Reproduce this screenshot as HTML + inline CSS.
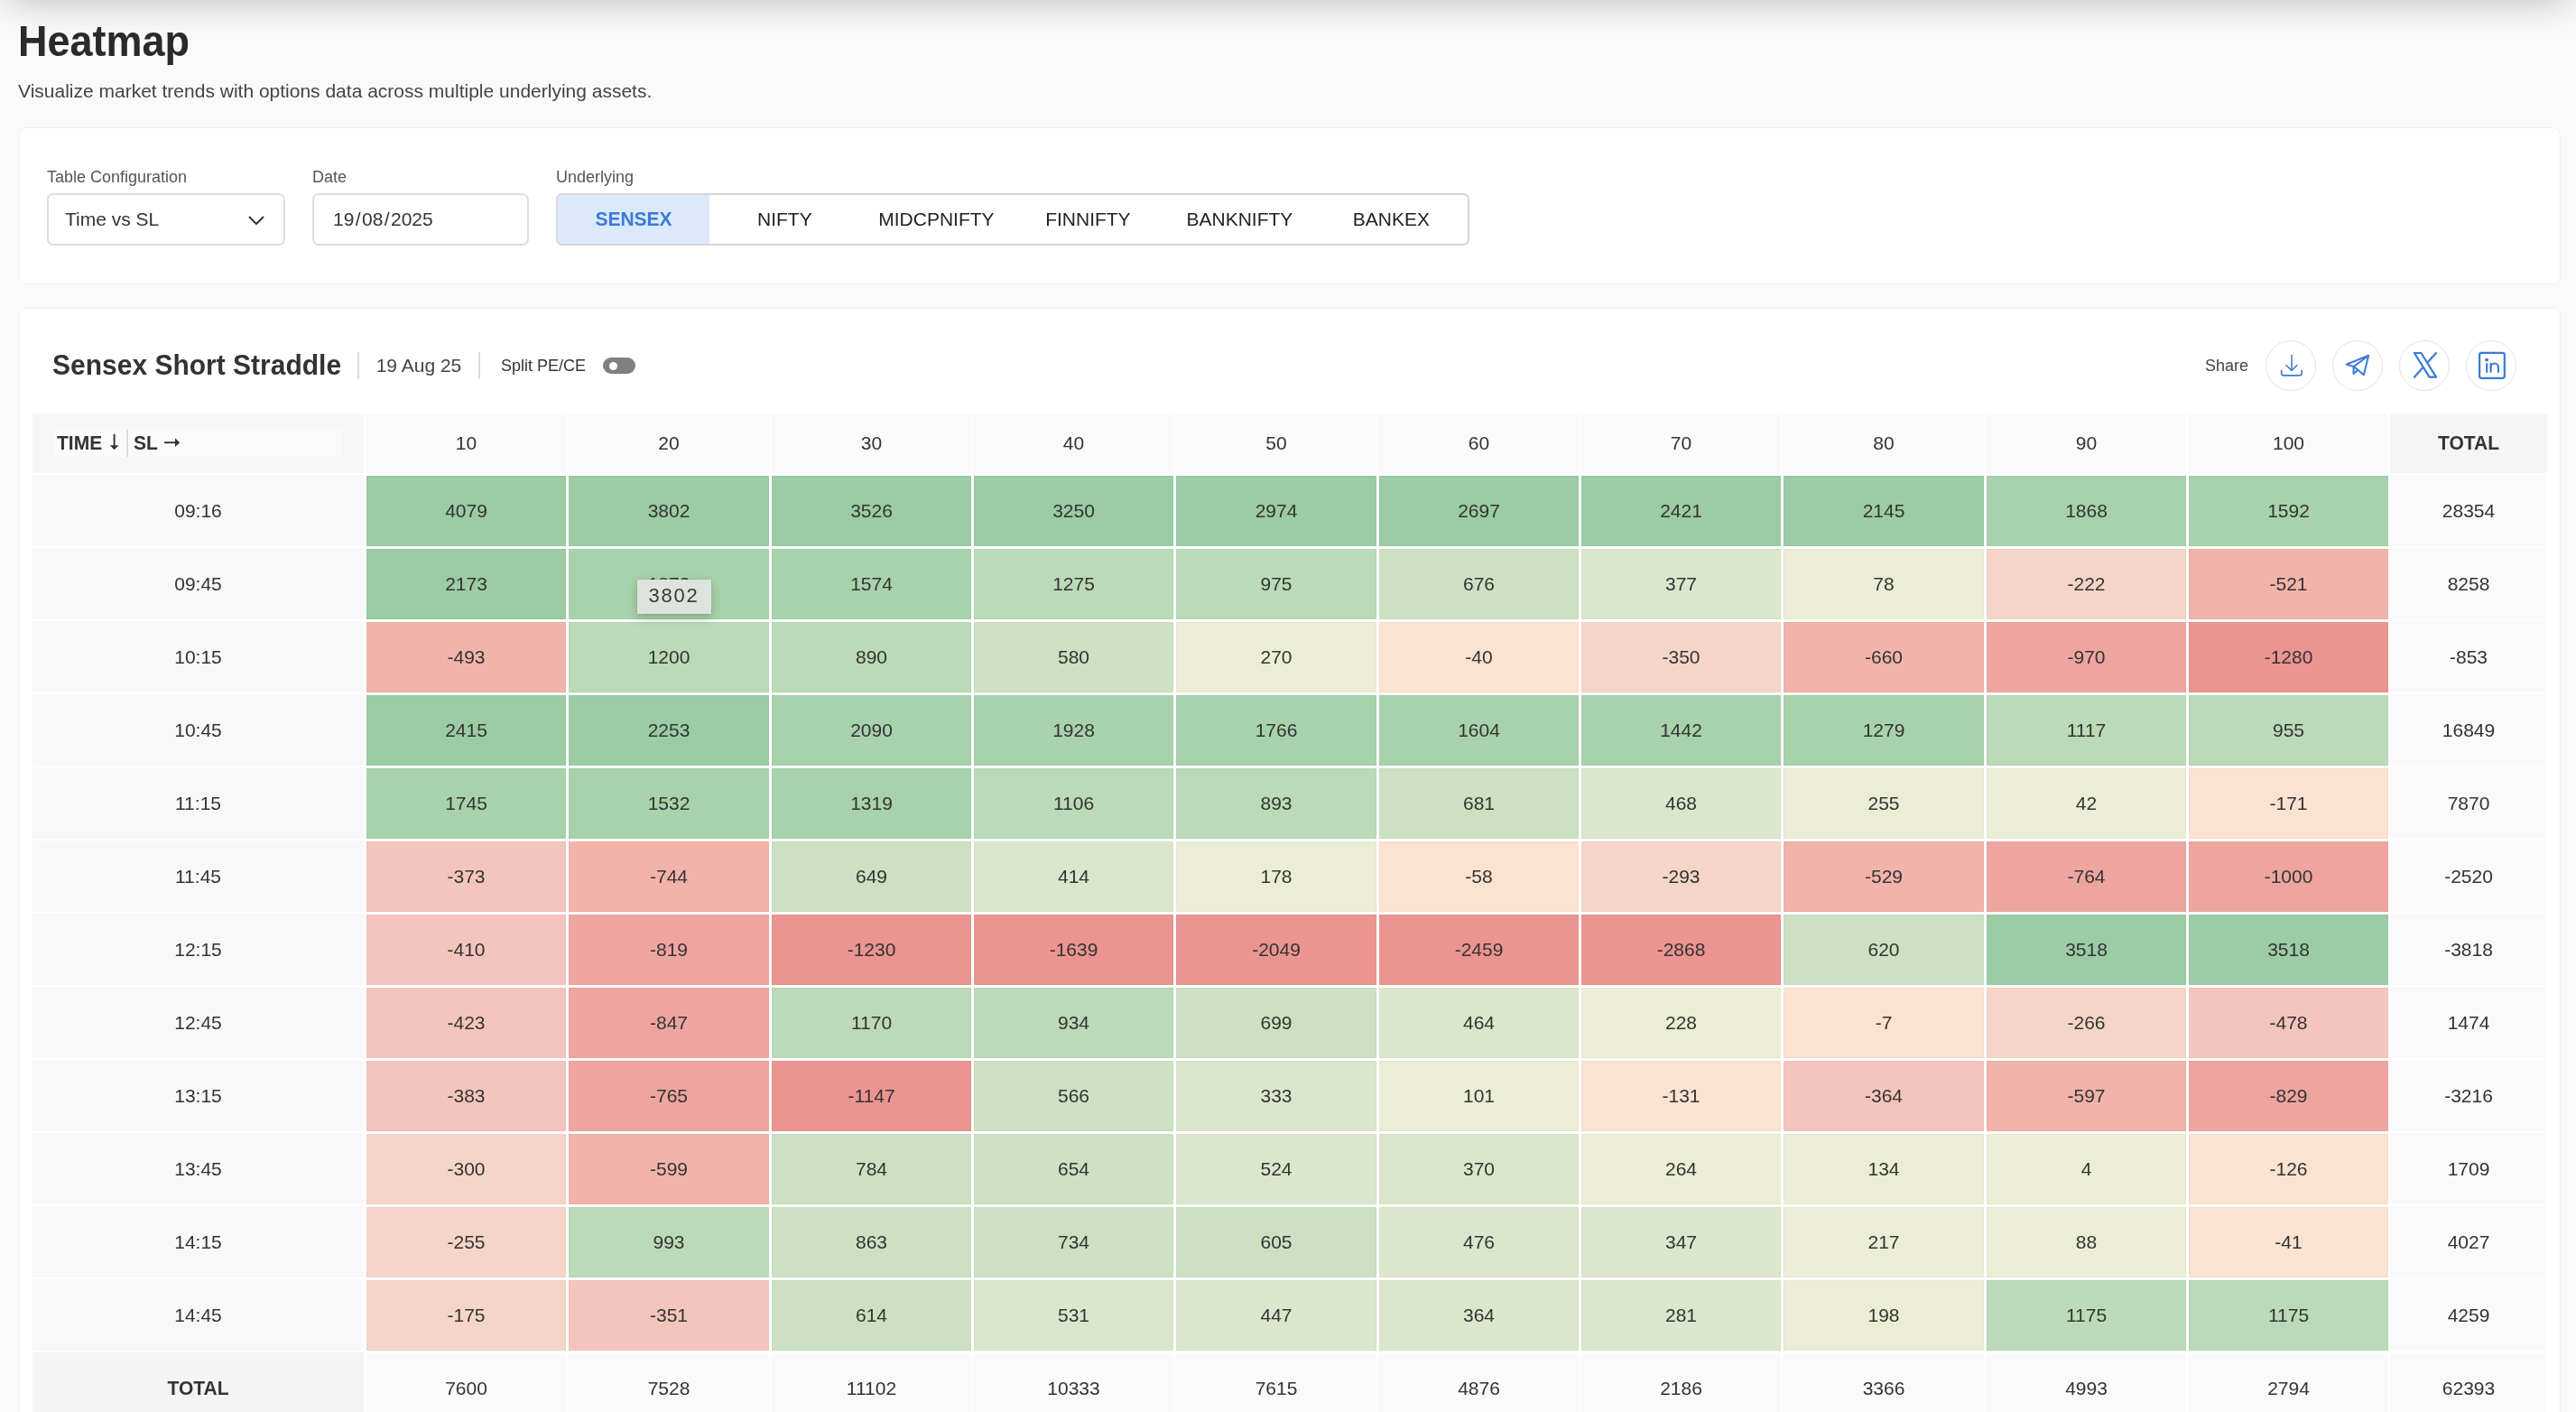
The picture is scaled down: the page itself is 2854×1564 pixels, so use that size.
<!DOCTYPE html>
<html><head><meta charset="utf-8"><title>Heatmap</title>
<style>
html,body{margin:0;padding:0;overflow:hidden}
body{width:2854px;height:1564px;overflow:hidden;background:#fafafa;position:relative;font-family:"Liberation Sans", sans-serif;}
#root{position:absolute;left:0;top:0;width:2854px;height:1564px;overflow:hidden;will-change:transform;}
.b{position:absolute;display:block}
.t{position:absolute;white-space:nowrap;font-family:"Liberation Sans", sans-serif;}
</style></head><body><div id="root">
<div class="b" style="left:8px;top:-80px;width:2838px;height:80px;background:#ccc;box-shadow:0 0 45px rgba(0,0,0,.262)"></div>
<div class="t" style="top:23.91px;font-size:45px;line-height:45px;color:#2a2a2a;font-weight:700;left:20.00px;transform:scaleY(1.06);transform-origin:0 84.65%;">Heatmap</div>
<div class="t" style="top:89.82px;font-size:21px;line-height:21px;color:#444;left:20.00px;">Visualize market trends with options data across multiple underlying assets.</div>
<div class="b" style="left:21px;top:141px;width:2816px;height:174px;background:#fff;border:1px solid #efefef;border-radius:8px;box-sizing:border-box;"></div>
<div class="t" style="top:186.76px;font-size:18px;line-height:18px;color:#555;left:52.00px;">Table Configuration</div>
<div class="t" style="top:186.76px;font-size:18px;line-height:18px;color:#555;left:346.00px;">Date</div>
<div class="t" style="top:186.76px;font-size:18px;line-height:18px;color:#555;left:616.00px;">Underlying</div>
<div class="b" style="left:52px;top:214px;width:264px;height:58px;background:#fff;border:2px solid #dedede;border-radius:7px;box-sizing:border-box;"></div>
<div class="t" style="top:232.22px;font-size:21px;line-height:21px;color:#333;left:72.00px;">Time vs SL</div>
<svg class="b" style="left:274px;top:236px" width="20" height="16" viewBox="0 0 20 16"><path d="M2.5 4.5 L10 12 L17.5 4.5" fill="none" stroke="#333" stroke-width="2" stroke-linecap="round" stroke-linejoin="round"/></svg>
<div class="b" style="left:346px;top:214px;width:240px;height:58px;background:#fff;border:2px solid #dedede;border-radius:7px;box-sizing:border-box;"></div>
<div class="t" style="top:232.22px;font-size:21px;line-height:21px;color:#333;left:369.00px;">19<span style="margin:0 1.4px">/</span>08<span style="margin:0 1.4px">/</span>2025</div>
<div class="b" style="left:616px;top:214px;width:1012px;height:58px;background:#fff;border:2px solid #d6d6d6;border-radius:7px;box-sizing:border-box;overflow:hidden;"></div>
<div class="b" style="left:618px;top:216px;width:168px;height:54px;background:#dbe9fb;border-radius:5px 0 0 5px;"></div>
<div class="t" style="top:232.22px;font-size:21px;line-height:21px;color:#3a7bd5;font-weight:700;left:302.00px;width:800px;text-align:center;transform:scaleY(1.08);transform-origin:0 84.65%;">SENSEX</div>
<div class="t" style="top:232.22px;font-size:21px;line-height:21px;color:#222;left:469.40px;width:800px;text-align:center;">NIFTY</div>
<div class="t" style="top:232.22px;font-size:21px;line-height:21px;color:#222;left:637.40px;width:800px;text-align:center;">MIDCPNIFTY</div>
<div class="t" style="top:232.22px;font-size:21px;line-height:21px;color:#222;left:805.40px;width:800px;text-align:center;">FINNIFTY</div>
<div class="t" style="top:232.22px;font-size:21px;line-height:21px;color:#222;left:973.40px;width:800px;text-align:center;">BANKNIFTY</div>
<div class="t" style="top:232.22px;font-size:21px;line-height:21px;color:#222;left:1141.40px;width:800px;text-align:center;">BANKEX</div>
<div class="b" style="left:21px;top:341px;width:2816px;height:1359px;background:#fff;border:1px solid #efefef;border-radius:8px;box-sizing:border-box;"></div>
<div class="t" style="top:390.11px;font-size:30px;line-height:30px;color:#333;font-weight:700;left:58.00px;transform:scaleY(1.06);transform-origin:0 84.65%;">Sensex Short Straddle</div>
<div class="b" style="left:396px;top:390px;width:2px;height:30px;background:#ddd;"></div>
<div class="t" style="top:393.92px;font-size:21px;line-height:21px;color:#444;left:416.70px;">19 Aug 25</div>
<div class="b" style="left:530px;top:390px;width:2px;height:30px;background:#ddd;"></div>
<div class="t" style="top:396.26px;font-size:18px;line-height:18px;color:#333;left:555.00px;">Split PE/CE</div>
<div class="b" style="left:668px;top:396px;width:36px;height:18px;background:#808080;border-radius:9px;"></div>
<div class="b" style="left:675px;top:401px;width:9px;height:9px;background:#fff;border-radius:4.5px;"></div>
<div class="t" style="top:395.96px;font-size:18px;line-height:18px;color:#444;left:2443.00px;">Share</div>
<div class="b" style="left:2510px;top:377px;width:56px;height:56px;background:#fff;border:1px solid #e1e1e1;border-radius:28px;box-sizing:border-box;"></div>
<div class="b" style="left:2584px;top:377px;width:56px;height:56px;background:#fff;border:1px solid #e1e1e1;border-radius:28px;box-sizing:border-box;"></div>
<div class="b" style="left:2658px;top:377px;width:56px;height:56px;background:#fff;border:1px solid #e1e1e1;border-radius:28px;box-sizing:border-box;"></div>
<div class="b" style="left:2732px;top:377px;width:56px;height:56px;background:#fff;border:1px solid #e1e1e1;border-radius:28px;box-sizing:border-box;"></div>
<svg class="b" style="left:2520px;top:388px" width="38" height="34" viewBox="0 0 38 34"><g fill="none" stroke="#3a7bd5" stroke-linecap="round" stroke-linejoin="round"><path stroke-width="1.5" stroke-linecap="butt" d="M19 4.9 V22"/><path stroke-width="1.6" d="M12.9 16.5 L19 22.4 L25.1 16.5"/><path stroke-width="1.7" d="M7.7 22.3 V25.3 a2.5 2.5 0 0 0 2.5 2.5 H27.7 a2.5 2.5 0 0 0 2.5 -2.5 V22.3"/></g></svg>
<svg class="b" style="left:2590px;top:385px" width="40" height="40" viewBox="0 0 40 40"><g fill="none" stroke="#3a7bd5" stroke-width="2" stroke-linecap="round" stroke-linejoin="round"><path d="M34.2 8.75 L9.7 18.6 L17.9 21 L34.2 8.75 L28.8 30.3 L17.9 21"/><path d="M17.6 21.3 L17.5 29.1 L21.8 25.2"/></g></svg>
<svg class="b" style="left:2670px;top:385px" width="36" height="40" viewBox="0 0 36 40"><g fill="none" stroke="#3a7bd5" stroke-width="2.2" stroke-linecap="round" stroke-linejoin="round"><path d="M4.9 6 H12.4 L29.05 32.7 H21.6 Z"/><path d="M29.05 6 L19.9 16.05"/><path d="M4.9 32.7 L14.1 22.2"/></g></svg>
<svg class="b" style="left:2740px;top:385px" width="42" height="40" viewBox="0 0 42 40"><rect x="7.1" y="5.9" width="27.7" height="27.9" rx="2" fill="none" stroke="#3a7bd5" stroke-width="2.2"/><g fill="none" stroke="#3a7bd5" stroke-width="2.1" stroke-linecap="round"><path d="M15.2 18.1 V26.9"/><path d="M19.6 17.7 V26.9"/><path d="M19.6 21.6 a4.17 4.17 0 0 1 8.35 0 V26.9"/></g><circle cx="15.1" cy="13.6" r="1.95" fill="#3a7bd5"/></svg>
<div class="b" style="left:36px;top:458px;width:367px;height:66px;background:#f7f7f7;"></div>
<div class="b" style="left:60px;top:476px;width:319px;height:30px;background:#fafafa;"></div>
<div class="t" style="top:480.22px;font-size:21px;line-height:21px;color:#333;font-weight:700;left:63.00px;transform:scaleY(1.08);transform-origin:0 84.65%;">TIME</div>
<div class="t" style="top:480.22px;font-size:21px;line-height:21px;color:#333;font-weight:700;left:148.00px;transform:scaleY(1.08);transform-origin:0 84.65%;">SL</div>
<div class="b" style="left:140px;top:476px;width:2px;height:30px;background:#ddd;"></div>
<svg class="b" style="left:118px;top:478px" width="18" height="24" viewBox="0 0 18 24"><path d="M8.6 2.9 V16" fill="none" stroke="#333" stroke-width="1.9"/><path d="M3.8 15.3 H13.4 L8.6 20.3 Z" fill="#333"/></svg>
<svg class="b" style="left:178px;top:480px" width="26" height="20" viewBox="0 0 26 20"><path d="M4 10.2 H17" fill="none" stroke="#333" stroke-width="1.9"/><path d="M16 5.3 V15.1 L21.2 10.2 Z" fill="#333"/></svg>
<div class="b" style="left:405px;top:458px;width:222px;height:66px;background:#fafafa;"></div>
<div class="t" style="top:480.22px;font-size:21px;line-height:21px;color:#333;left:116.50px;width:800px;text-align:center;">10</div>
<div class="b" style="left:629px;top:458px;width:223px;height:66px;background:#fafafa;"></div>
<div class="t" style="top:480.22px;font-size:21px;line-height:21px;color:#333;left:341.00px;width:800px;text-align:center;">20</div>
<div class="b" style="left:854px;top:458px;width:222px;height:66px;background:#fafafa;"></div>
<div class="t" style="top:480.22px;font-size:21px;line-height:21px;color:#333;left:565.50px;width:800px;text-align:center;">30</div>
<div class="b" style="left:1078px;top:458px;width:222px;height:66px;background:#fafafa;"></div>
<div class="t" style="top:480.22px;font-size:21px;line-height:21px;color:#333;left:789.50px;width:800px;text-align:center;">40</div>
<div class="b" style="left:1302px;top:458px;width:223px;height:66px;background:#fafafa;"></div>
<div class="t" style="top:480.22px;font-size:21px;line-height:21px;color:#333;left:1014.00px;width:800px;text-align:center;">50</div>
<div class="b" style="left:1527px;top:458px;width:222px;height:66px;background:#fafafa;"></div>
<div class="t" style="top:480.22px;font-size:21px;line-height:21px;color:#333;left:1238.50px;width:800px;text-align:center;">60</div>
<div class="b" style="left:1751px;top:458px;width:222px;height:66px;background:#fafafa;"></div>
<div class="t" style="top:480.22px;font-size:21px;line-height:21px;color:#333;left:1462.50px;width:800px;text-align:center;">70</div>
<div class="b" style="left:1975px;top:458px;width:223px;height:66px;background:#fafafa;"></div>
<div class="t" style="top:480.22px;font-size:21px;line-height:21px;color:#333;left:1687.00px;width:800px;text-align:center;">80</div>
<div class="b" style="left:2200px;top:458px;width:222px;height:66px;background:#fafafa;"></div>
<div class="t" style="top:480.22px;font-size:21px;line-height:21px;color:#333;left:1911.50px;width:800px;text-align:center;">90</div>
<div class="b" style="left:2424px;top:458px;width:222px;height:66px;background:#fafafa;"></div>
<div class="t" style="top:480.22px;font-size:21px;line-height:21px;color:#333;left:2135.50px;width:800px;text-align:center;">100</div>
<div class="b" style="left:2648px;top:458px;width:174px;height:66px;background:#f5f5f5;"></div>
<div class="t" style="top:480.22px;font-size:21px;line-height:21px;color:#333;font-weight:700;left:2335.00px;width:800px;text-align:center;transform:scaleY(1.08);transform-origin:0 84.65%;">TOTAL</div>
<div class="b" style="left:36px;top:526px;width:367px;height:79px;background:#f8f8f8;"></div>
<div class="t" style="top:555.22px;font-size:21px;line-height:21px;color:#333;left:-180.50px;width:800px;text-align:center;">09:16</div>
<div class="b" style="left:406px;top:527px;width:221px;height:78px;background:#9bcca3;box-shadow:inset 0 0 0 1px rgba(0,0,0,.022);"></div>
<div class="t" style="top:555.22px;font-size:21px;line-height:21px;color:#333;left:116.50px;width:800px;text-align:center;">4079</div>
<div class="b" style="left:630px;top:527px;width:222px;height:78px;background:#9bcca3;box-shadow:inset 0 0 0 1px rgba(0,0,0,.022);"></div>
<div class="t" style="top:555.22px;font-size:21px;line-height:21px;color:#333;left:341.00px;width:800px;text-align:center;">3802</div>
<div class="b" style="left:855px;top:527px;width:221px;height:78px;background:#9bcca3;box-shadow:inset 0 0 0 1px rgba(0,0,0,.022);"></div>
<div class="t" style="top:555.22px;font-size:21px;line-height:21px;color:#333;left:565.50px;width:800px;text-align:center;">3526</div>
<div class="b" style="left:1079px;top:527px;width:221px;height:78px;background:#9bcca3;box-shadow:inset 0 0 0 1px rgba(0,0,0,.022);"></div>
<div class="t" style="top:555.22px;font-size:21px;line-height:21px;color:#333;left:789.50px;width:800px;text-align:center;">3250</div>
<div class="b" style="left:1303px;top:527px;width:222px;height:78px;background:#9bcca3;box-shadow:inset 0 0 0 1px rgba(0,0,0,.022);"></div>
<div class="t" style="top:555.22px;font-size:21px;line-height:21px;color:#333;left:1014.00px;width:800px;text-align:center;">2974</div>
<div class="b" style="left:1528px;top:527px;width:221px;height:78px;background:#9bcca3;box-shadow:inset 0 0 0 1px rgba(0,0,0,.022);"></div>
<div class="t" style="top:555.22px;font-size:21px;line-height:21px;color:#333;left:1238.50px;width:800px;text-align:center;">2697</div>
<div class="b" style="left:1752px;top:527px;width:221px;height:78px;background:#9bcca3;box-shadow:inset 0 0 0 1px rgba(0,0,0,.022);"></div>
<div class="t" style="top:555.22px;font-size:21px;line-height:21px;color:#333;left:1462.50px;width:800px;text-align:center;">2421</div>
<div class="b" style="left:1976px;top:527px;width:222px;height:78px;background:#9bcca3;box-shadow:inset 0 0 0 1px rgba(0,0,0,.022);"></div>
<div class="t" style="top:555.22px;font-size:21px;line-height:21px;color:#333;left:1687.00px;width:800px;text-align:center;">2145</div>
<div class="b" style="left:2201px;top:527px;width:221px;height:78px;background:#a8d2ab;box-shadow:inset 0 0 0 1px rgba(0,0,0,.022);"></div>
<div class="t" style="top:555.22px;font-size:21px;line-height:21px;color:#333;left:1911.50px;width:800px;text-align:center;">1868</div>
<div class="b" style="left:2425px;top:527px;width:221px;height:78px;background:#a8d2ab;box-shadow:inset 0 0 0 1px rgba(0,0,0,.022);"></div>
<div class="t" style="top:555.22px;font-size:21px;line-height:21px;color:#333;left:2135.50px;width:800px;text-align:center;">1592</div>
<div class="b" style="left:2648px;top:526px;width:174px;height:79px;background:#fafafa;"></div>
<div class="t" style="top:555.22px;font-size:21px;line-height:21px;color:#333;left:2335.00px;width:800px;text-align:center;">28354</div>
<div class="b" style="left:36px;top:607px;width:367px;height:79px;background:#f8f8f8;"></div>
<div class="t" style="top:636.22px;font-size:21px;line-height:21px;color:#333;left:-180.50px;width:800px;text-align:center;">09:45</div>
<div class="b" style="left:406px;top:608px;width:221px;height:78px;background:#9bcca3;box-shadow:inset 0 0 0 1px rgba(0,0,0,.022);"></div>
<div class="t" style="top:636.22px;font-size:21px;line-height:21px;color:#333;left:116.50px;width:800px;text-align:center;">2173</div>
<div class="b" style="left:630px;top:608px;width:222px;height:78px;background:#a8d2ab;box-shadow:inset 0 0 0 1px rgba(0,0,0,.022);"></div>
<div class="t" style="top:636.22px;font-size:21px;line-height:21px;color:#333;left:341.00px;width:800px;text-align:center;">1873</div>
<div class="b" style="left:855px;top:608px;width:221px;height:78px;background:#a8d2ab;box-shadow:inset 0 0 0 1px rgba(0,0,0,.022);"></div>
<div class="t" style="top:636.22px;font-size:21px;line-height:21px;color:#333;left:565.50px;width:800px;text-align:center;">1574</div>
<div class="b" style="left:1079px;top:608px;width:221px;height:78px;background:#bbdab7;box-shadow:inset 0 0 0 1px rgba(0,0,0,.022);"></div>
<div class="t" style="top:636.22px;font-size:21px;line-height:21px;color:#333;left:789.50px;width:800px;text-align:center;">1275</div>
<div class="b" style="left:1303px;top:608px;width:222px;height:78px;background:#bbdab7;box-shadow:inset 0 0 0 1px rgba(0,0,0,.022);"></div>
<div class="t" style="top:636.22px;font-size:21px;line-height:21px;color:#333;left:1014.00px;width:800px;text-align:center;">975</div>
<div class="b" style="left:1528px;top:608px;width:221px;height:78px;background:#cbe1c2;box-shadow:inset 0 0 0 1px rgba(0,0,0,.022);"></div>
<div class="t" style="top:636.22px;font-size:21px;line-height:21px;color:#333;left:1238.50px;width:800px;text-align:center;">676</div>
<div class="b" style="left:1752px;top:608px;width:221px;height:78px;background:#dbe7cd;box-shadow:inset 0 0 0 1px rgba(0,0,0,.022);"></div>
<div class="t" style="top:636.22px;font-size:21px;line-height:21px;color:#333;left:1462.50px;width:800px;text-align:center;">377</div>
<div class="b" style="left:1976px;top:608px;width:222px;height:78px;background:#ebedd4;box-shadow:inset 0 0 0 1px rgba(0,0,0,.022);"></div>
<div class="t" style="top:636.22px;font-size:21px;line-height:21px;color:#333;left:1687.00px;width:800px;text-align:center;">78</div>
<div class="b" style="left:2201px;top:608px;width:221px;height:78px;background:#f5d5c7;box-shadow:inset 0 0 0 1px rgba(0,0,0,.022);"></div>
<div class="t" style="top:636.22px;font-size:21px;line-height:21px;color:#333;left:1911.50px;width:800px;text-align:center;">-222</div>
<div class="b" style="left:2425px;top:608px;width:221px;height:78px;background:#f2b3ab;box-shadow:inset 0 0 0 1px rgba(0,0,0,.022);"></div>
<div class="t" style="top:636.22px;font-size:21px;line-height:21px;color:#333;left:2135.50px;width:800px;text-align:center;">-521</div>
<div class="b" style="left:2648px;top:607px;width:174px;height:79px;background:#fafafa;"></div>
<div class="t" style="top:636.22px;font-size:21px;line-height:21px;color:#333;left:2335.00px;width:800px;text-align:center;">8258</div>
<div class="b" style="left:36px;top:688px;width:367px;height:79px;background:#f8f8f8;"></div>
<div class="t" style="top:717.22px;font-size:21px;line-height:21px;color:#333;left:-180.50px;width:800px;text-align:center;">10:15</div>
<div class="b" style="left:406px;top:689px;width:221px;height:78px;background:#f2b3ab;box-shadow:inset 0 0 0 1px rgba(0,0,0,.022);"></div>
<div class="t" style="top:717.22px;font-size:21px;line-height:21px;color:#333;left:116.50px;width:800px;text-align:center;">-493</div>
<div class="b" style="left:630px;top:689px;width:222px;height:78px;background:#bbdab7;box-shadow:inset 0 0 0 1px rgba(0,0,0,.022);"></div>
<div class="t" style="top:717.22px;font-size:21px;line-height:21px;color:#333;left:341.00px;width:800px;text-align:center;">1200</div>
<div class="b" style="left:855px;top:689px;width:221px;height:78px;background:#bbdab7;box-shadow:inset 0 0 0 1px rgba(0,0,0,.022);"></div>
<div class="t" style="top:717.22px;font-size:21px;line-height:21px;color:#333;left:565.50px;width:800px;text-align:center;">890</div>
<div class="b" style="left:1079px;top:689px;width:221px;height:78px;background:#cbe1c2;box-shadow:inset 0 0 0 1px rgba(0,0,0,.022);"></div>
<div class="t" style="top:717.22px;font-size:21px;line-height:21px;color:#333;left:789.50px;width:800px;text-align:center;">580</div>
<div class="b" style="left:1303px;top:689px;width:222px;height:78px;background:#ebedd4;box-shadow:inset 0 0 0 1px rgba(0,0,0,.022);"></div>
<div class="t" style="top:717.22px;font-size:21px;line-height:21px;color:#333;left:1014.00px;width:800px;text-align:center;">270</div>
<div class="b" style="left:1528px;top:689px;width:221px;height:78px;background:#fbe2d1;box-shadow:inset 0 0 0 1px rgba(0,0,0,.022);"></div>
<div class="t" style="top:717.22px;font-size:21px;line-height:21px;color:#333;left:1238.50px;width:800px;text-align:center;">-40</div>
<div class="b" style="left:1752px;top:689px;width:221px;height:78px;background:#f5d5c7;box-shadow:inset 0 0 0 1px rgba(0,0,0,.022);"></div>
<div class="t" style="top:717.22px;font-size:21px;line-height:21px;color:#333;left:1462.50px;width:800px;text-align:center;">-350</div>
<div class="b" style="left:1976px;top:689px;width:222px;height:78px;background:#f2b3ab;box-shadow:inset 0 0 0 1px rgba(0,0,0,.022);"></div>
<div class="t" style="top:717.22px;font-size:21px;line-height:21px;color:#333;left:1687.00px;width:800px;text-align:center;">-660</div>
<div class="b" style="left:2201px;top:689px;width:221px;height:78px;background:#eea5a0;box-shadow:inset 0 0 0 1px rgba(0,0,0,.022);"></div>
<div class="t" style="top:717.22px;font-size:21px;line-height:21px;color:#333;left:1911.50px;width:800px;text-align:center;">-970</div>
<div class="b" style="left:2425px;top:689px;width:221px;height:78px;background:#eb9492;box-shadow:inset 0 0 0 1px rgba(0,0,0,.022);"></div>
<div class="t" style="top:717.22px;font-size:21px;line-height:21px;color:#333;left:2135.50px;width:800px;text-align:center;">-1280</div>
<div class="b" style="left:2648px;top:688px;width:174px;height:79px;background:#fafafa;"></div>
<div class="t" style="top:717.22px;font-size:21px;line-height:21px;color:#333;left:2335.00px;width:800px;text-align:center;">-853</div>
<div class="b" style="left:36px;top:769px;width:367px;height:79px;background:#f8f8f8;"></div>
<div class="t" style="top:798.22px;font-size:21px;line-height:21px;color:#333;left:-180.50px;width:800px;text-align:center;">10:45</div>
<div class="b" style="left:406px;top:770px;width:221px;height:78px;background:#9bcca3;box-shadow:inset 0 0 0 1px rgba(0,0,0,.022);"></div>
<div class="t" style="top:798.22px;font-size:21px;line-height:21px;color:#333;left:116.50px;width:800px;text-align:center;">2415</div>
<div class="b" style="left:630px;top:770px;width:222px;height:78px;background:#9bcca3;box-shadow:inset 0 0 0 1px rgba(0,0,0,.022);"></div>
<div class="t" style="top:798.22px;font-size:21px;line-height:21px;color:#333;left:341.00px;width:800px;text-align:center;">2253</div>
<div class="b" style="left:855px;top:770px;width:221px;height:78px;background:#a8d2ab;box-shadow:inset 0 0 0 1px rgba(0,0,0,.022);"></div>
<div class="t" style="top:798.22px;font-size:21px;line-height:21px;color:#333;left:565.50px;width:800px;text-align:center;">2090</div>
<div class="b" style="left:1079px;top:770px;width:221px;height:78px;background:#a8d2ab;box-shadow:inset 0 0 0 1px rgba(0,0,0,.022);"></div>
<div class="t" style="top:798.22px;font-size:21px;line-height:21px;color:#333;left:789.50px;width:800px;text-align:center;">1928</div>
<div class="b" style="left:1303px;top:770px;width:222px;height:78px;background:#a8d2ab;box-shadow:inset 0 0 0 1px rgba(0,0,0,.022);"></div>
<div class="t" style="top:798.22px;font-size:21px;line-height:21px;color:#333;left:1014.00px;width:800px;text-align:center;">1766</div>
<div class="b" style="left:1528px;top:770px;width:221px;height:78px;background:#a8d2ab;box-shadow:inset 0 0 0 1px rgba(0,0,0,.022);"></div>
<div class="t" style="top:798.22px;font-size:21px;line-height:21px;color:#333;left:1238.50px;width:800px;text-align:center;">1604</div>
<div class="b" style="left:1752px;top:770px;width:221px;height:78px;background:#a8d2ab;box-shadow:inset 0 0 0 1px rgba(0,0,0,.022);"></div>
<div class="t" style="top:798.22px;font-size:21px;line-height:21px;color:#333;left:1462.50px;width:800px;text-align:center;">1442</div>
<div class="b" style="left:1976px;top:770px;width:222px;height:78px;background:#a8d2ab;box-shadow:inset 0 0 0 1px rgba(0,0,0,.022);"></div>
<div class="t" style="top:798.22px;font-size:21px;line-height:21px;color:#333;left:1687.00px;width:800px;text-align:center;">1279</div>
<div class="b" style="left:2201px;top:770px;width:221px;height:78px;background:#bbdab7;box-shadow:inset 0 0 0 1px rgba(0,0,0,.022);"></div>
<div class="t" style="top:798.22px;font-size:21px;line-height:21px;color:#333;left:1911.50px;width:800px;text-align:center;">1117</div>
<div class="b" style="left:2425px;top:770px;width:221px;height:78px;background:#bbdab7;box-shadow:inset 0 0 0 1px rgba(0,0,0,.022);"></div>
<div class="t" style="top:798.22px;font-size:21px;line-height:21px;color:#333;left:2135.50px;width:800px;text-align:center;">955</div>
<div class="b" style="left:2648px;top:769px;width:174px;height:79px;background:#fafafa;"></div>
<div class="t" style="top:798.22px;font-size:21px;line-height:21px;color:#333;left:2335.00px;width:800px;text-align:center;">16849</div>
<div class="b" style="left:36px;top:850px;width:367px;height:79px;background:#f8f8f8;"></div>
<div class="t" style="top:879.22px;font-size:21px;line-height:21px;color:#333;left:-180.50px;width:800px;text-align:center;">11:15</div>
<div class="b" style="left:406px;top:851px;width:221px;height:78px;background:#a8d2ab;box-shadow:inset 0 0 0 1px rgba(0,0,0,.022);"></div>
<div class="t" style="top:879.22px;font-size:21px;line-height:21px;color:#333;left:116.50px;width:800px;text-align:center;">1745</div>
<div class="b" style="left:630px;top:851px;width:222px;height:78px;background:#a8d2ab;box-shadow:inset 0 0 0 1px rgba(0,0,0,.022);"></div>
<div class="t" style="top:879.22px;font-size:21px;line-height:21px;color:#333;left:341.00px;width:800px;text-align:center;">1532</div>
<div class="b" style="left:855px;top:851px;width:221px;height:78px;background:#a8d2ab;box-shadow:inset 0 0 0 1px rgba(0,0,0,.022);"></div>
<div class="t" style="top:879.22px;font-size:21px;line-height:21px;color:#333;left:565.50px;width:800px;text-align:center;">1319</div>
<div class="b" style="left:1079px;top:851px;width:221px;height:78px;background:#bbdab7;box-shadow:inset 0 0 0 1px rgba(0,0,0,.022);"></div>
<div class="t" style="top:879.22px;font-size:21px;line-height:21px;color:#333;left:789.50px;width:800px;text-align:center;">1106</div>
<div class="b" style="left:1303px;top:851px;width:222px;height:78px;background:#bbdab7;box-shadow:inset 0 0 0 1px rgba(0,0,0,.022);"></div>
<div class="t" style="top:879.22px;font-size:21px;line-height:21px;color:#333;left:1014.00px;width:800px;text-align:center;">893</div>
<div class="b" style="left:1528px;top:851px;width:221px;height:78px;background:#cbe1c2;box-shadow:inset 0 0 0 1px rgba(0,0,0,.022);"></div>
<div class="t" style="top:879.22px;font-size:21px;line-height:21px;color:#333;left:1238.50px;width:800px;text-align:center;">681</div>
<div class="b" style="left:1752px;top:851px;width:221px;height:78px;background:#dbe7cd;box-shadow:inset 0 0 0 1px rgba(0,0,0,.022);"></div>
<div class="t" style="top:879.22px;font-size:21px;line-height:21px;color:#333;left:1462.50px;width:800px;text-align:center;">468</div>
<div class="b" style="left:1976px;top:851px;width:222px;height:78px;background:#ebedd4;box-shadow:inset 0 0 0 1px rgba(0,0,0,.022);"></div>
<div class="t" style="top:879.22px;font-size:21px;line-height:21px;color:#333;left:1687.00px;width:800px;text-align:center;">255</div>
<div class="b" style="left:2201px;top:851px;width:221px;height:78px;background:#ebedd4;box-shadow:inset 0 0 0 1px rgba(0,0,0,.022);"></div>
<div class="t" style="top:879.22px;font-size:21px;line-height:21px;color:#333;left:1911.50px;width:800px;text-align:center;">42</div>
<div class="b" style="left:2425px;top:851px;width:221px;height:78px;background:#fbe2d1;box-shadow:inset 0 0 0 1px rgba(0,0,0,.022);"></div>
<div class="t" style="top:879.22px;font-size:21px;line-height:21px;color:#333;left:2135.50px;width:800px;text-align:center;">-171</div>
<div class="b" style="left:2648px;top:850px;width:174px;height:79px;background:#fafafa;"></div>
<div class="t" style="top:879.22px;font-size:21px;line-height:21px;color:#333;left:2335.00px;width:800px;text-align:center;">7870</div>
<div class="b" style="left:36px;top:931px;width:367px;height:79px;background:#f8f8f8;"></div>
<div class="t" style="top:960.22px;font-size:21px;line-height:21px;color:#333;left:-180.50px;width:800px;text-align:center;">11:45</div>
<div class="b" style="left:406px;top:932px;width:221px;height:78px;background:#f4c5bc;box-shadow:inset 0 0 0 1px rgba(0,0,0,.022);"></div>
<div class="t" style="top:960.22px;font-size:21px;line-height:21px;color:#333;left:116.50px;width:800px;text-align:center;">-373</div>
<div class="b" style="left:630px;top:932px;width:222px;height:78px;background:#f2b3ab;box-shadow:inset 0 0 0 1px rgba(0,0,0,.022);"></div>
<div class="t" style="top:960.22px;font-size:21px;line-height:21px;color:#333;left:341.00px;width:800px;text-align:center;">-744</div>
<div class="b" style="left:855px;top:932px;width:221px;height:78px;background:#cbe1c2;box-shadow:inset 0 0 0 1px rgba(0,0,0,.022);"></div>
<div class="t" style="top:960.22px;font-size:21px;line-height:21px;color:#333;left:565.50px;width:800px;text-align:center;">649</div>
<div class="b" style="left:1079px;top:932px;width:221px;height:78px;background:#dbe7cd;box-shadow:inset 0 0 0 1px rgba(0,0,0,.022);"></div>
<div class="t" style="top:960.22px;font-size:21px;line-height:21px;color:#333;left:789.50px;width:800px;text-align:center;">414</div>
<div class="b" style="left:1303px;top:932px;width:222px;height:78px;background:#ebedd4;box-shadow:inset 0 0 0 1px rgba(0,0,0,.022);"></div>
<div class="t" style="top:960.22px;font-size:21px;line-height:21px;color:#333;left:1014.00px;width:800px;text-align:center;">178</div>
<div class="b" style="left:1528px;top:932px;width:221px;height:78px;background:#fbe2d1;box-shadow:inset 0 0 0 1px rgba(0,0,0,.022);"></div>
<div class="t" style="top:960.22px;font-size:21px;line-height:21px;color:#333;left:1238.50px;width:800px;text-align:center;">-58</div>
<div class="b" style="left:1752px;top:932px;width:221px;height:78px;background:#f5d5c7;box-shadow:inset 0 0 0 1px rgba(0,0,0,.022);"></div>
<div class="t" style="top:960.22px;font-size:21px;line-height:21px;color:#333;left:1462.50px;width:800px;text-align:center;">-293</div>
<div class="b" style="left:1976px;top:932px;width:222px;height:78px;background:#f2b3ab;box-shadow:inset 0 0 0 1px rgba(0,0,0,.022);"></div>
<div class="t" style="top:960.22px;font-size:21px;line-height:21px;color:#333;left:1687.00px;width:800px;text-align:center;">-529</div>
<div class="b" style="left:2201px;top:932px;width:221px;height:78px;background:#eea5a0;box-shadow:inset 0 0 0 1px rgba(0,0,0,.022);"></div>
<div class="t" style="top:960.22px;font-size:21px;line-height:21px;color:#333;left:1911.50px;width:800px;text-align:center;">-764</div>
<div class="b" style="left:2425px;top:932px;width:221px;height:78px;background:#eea5a0;box-shadow:inset 0 0 0 1px rgba(0,0,0,.022);"></div>
<div class="t" style="top:960.22px;font-size:21px;line-height:21px;color:#333;left:2135.50px;width:800px;text-align:center;">-1000</div>
<div class="b" style="left:2648px;top:931px;width:174px;height:79px;background:#fafafa;"></div>
<div class="t" style="top:960.22px;font-size:21px;line-height:21px;color:#333;left:2335.00px;width:800px;text-align:center;">-2520</div>
<div class="b" style="left:36px;top:1012px;width:367px;height:79px;background:#f8f8f8;"></div>
<div class="t" style="top:1041.22px;font-size:21px;line-height:21px;color:#333;left:-180.50px;width:800px;text-align:center;">12:15</div>
<div class="b" style="left:406px;top:1013px;width:221px;height:78px;background:#f4c5bc;box-shadow:inset 0 0 0 1px rgba(0,0,0,.022);"></div>
<div class="t" style="top:1041.22px;font-size:21px;line-height:21px;color:#333;left:116.50px;width:800px;text-align:center;">-410</div>
<div class="b" style="left:630px;top:1013px;width:222px;height:78px;background:#eea5a0;box-shadow:inset 0 0 0 1px rgba(0,0,0,.022);"></div>
<div class="t" style="top:1041.22px;font-size:21px;line-height:21px;color:#333;left:341.00px;width:800px;text-align:center;">-819</div>
<div class="b" style="left:855px;top:1013px;width:221px;height:78px;background:#eb9492;box-shadow:inset 0 0 0 1px rgba(0,0,0,.022);"></div>
<div class="t" style="top:1041.22px;font-size:21px;line-height:21px;color:#333;left:565.50px;width:800px;text-align:center;">-1230</div>
<div class="b" style="left:1079px;top:1013px;width:221px;height:78px;background:#eb9492;box-shadow:inset 0 0 0 1px rgba(0,0,0,.022);"></div>
<div class="t" style="top:1041.22px;font-size:21px;line-height:21px;color:#333;left:789.50px;width:800px;text-align:center;">-1639</div>
<div class="b" style="left:1303px;top:1013px;width:222px;height:78px;background:#eb9492;box-shadow:inset 0 0 0 1px rgba(0,0,0,.022);"></div>
<div class="t" style="top:1041.22px;font-size:21px;line-height:21px;color:#333;left:1014.00px;width:800px;text-align:center;">-2049</div>
<div class="b" style="left:1528px;top:1013px;width:221px;height:78px;background:#eb9492;box-shadow:inset 0 0 0 1px rgba(0,0,0,.022);"></div>
<div class="t" style="top:1041.22px;font-size:21px;line-height:21px;color:#333;left:1238.50px;width:800px;text-align:center;">-2459</div>
<div class="b" style="left:1752px;top:1013px;width:221px;height:78px;background:#eb9492;box-shadow:inset 0 0 0 1px rgba(0,0,0,.022);"></div>
<div class="t" style="top:1041.22px;font-size:21px;line-height:21px;color:#333;left:1462.50px;width:800px;text-align:center;">-2868</div>
<div class="b" style="left:1976px;top:1013px;width:222px;height:78px;background:#cbe1c2;box-shadow:inset 0 0 0 1px rgba(0,0,0,.022);"></div>
<div class="t" style="top:1041.22px;font-size:21px;line-height:21px;color:#333;left:1687.00px;width:800px;text-align:center;">620</div>
<div class="b" style="left:2201px;top:1013px;width:221px;height:78px;background:#9bcca3;box-shadow:inset 0 0 0 1px rgba(0,0,0,.022);"></div>
<div class="t" style="top:1041.22px;font-size:21px;line-height:21px;color:#333;left:1911.50px;width:800px;text-align:center;">3518</div>
<div class="b" style="left:2425px;top:1013px;width:221px;height:78px;background:#9bcca3;box-shadow:inset 0 0 0 1px rgba(0,0,0,.022);"></div>
<div class="t" style="top:1041.22px;font-size:21px;line-height:21px;color:#333;left:2135.50px;width:800px;text-align:center;">3518</div>
<div class="b" style="left:2648px;top:1012px;width:174px;height:79px;background:#fafafa;"></div>
<div class="t" style="top:1041.22px;font-size:21px;line-height:21px;color:#333;left:2335.00px;width:800px;text-align:center;">-3818</div>
<div class="b" style="left:36px;top:1093px;width:367px;height:79px;background:#f8f8f8;"></div>
<div class="t" style="top:1122.22px;font-size:21px;line-height:21px;color:#333;left:-180.50px;width:800px;text-align:center;">12:45</div>
<div class="b" style="left:406px;top:1094px;width:221px;height:78px;background:#f4c5bc;box-shadow:inset 0 0 0 1px rgba(0,0,0,.022);"></div>
<div class="t" style="top:1122.22px;font-size:21px;line-height:21px;color:#333;left:116.50px;width:800px;text-align:center;">-423</div>
<div class="b" style="left:630px;top:1094px;width:222px;height:78px;background:#eea5a0;box-shadow:inset 0 0 0 1px rgba(0,0,0,.022);"></div>
<div class="t" style="top:1122.22px;font-size:21px;line-height:21px;color:#333;left:341.00px;width:800px;text-align:center;">-847</div>
<div class="b" style="left:855px;top:1094px;width:221px;height:78px;background:#bbdab7;box-shadow:inset 0 0 0 1px rgba(0,0,0,.022);"></div>
<div class="t" style="top:1122.22px;font-size:21px;line-height:21px;color:#333;left:565.50px;width:800px;text-align:center;">1170</div>
<div class="b" style="left:1079px;top:1094px;width:221px;height:78px;background:#bbdab7;box-shadow:inset 0 0 0 1px rgba(0,0,0,.022);"></div>
<div class="t" style="top:1122.22px;font-size:21px;line-height:21px;color:#333;left:789.50px;width:800px;text-align:center;">934</div>
<div class="b" style="left:1303px;top:1094px;width:222px;height:78px;background:#cbe1c2;box-shadow:inset 0 0 0 1px rgba(0,0,0,.022);"></div>
<div class="t" style="top:1122.22px;font-size:21px;line-height:21px;color:#333;left:1014.00px;width:800px;text-align:center;">699</div>
<div class="b" style="left:1528px;top:1094px;width:221px;height:78px;background:#dbe7cd;box-shadow:inset 0 0 0 1px rgba(0,0,0,.022);"></div>
<div class="t" style="top:1122.22px;font-size:21px;line-height:21px;color:#333;left:1238.50px;width:800px;text-align:center;">464</div>
<div class="b" style="left:1752px;top:1094px;width:221px;height:78px;background:#ebedd4;box-shadow:inset 0 0 0 1px rgba(0,0,0,.022);"></div>
<div class="t" style="top:1122.22px;font-size:21px;line-height:21px;color:#333;left:1462.50px;width:800px;text-align:center;">228</div>
<div class="b" style="left:1976px;top:1094px;width:222px;height:78px;background:#fbe2d1;box-shadow:inset 0 0 0 1px rgba(0,0,0,.022);"></div>
<div class="t" style="top:1122.22px;font-size:21px;line-height:21px;color:#333;left:1687.00px;width:800px;text-align:center;">-7</div>
<div class="b" style="left:2201px;top:1094px;width:221px;height:78px;background:#f5d5c7;box-shadow:inset 0 0 0 1px rgba(0,0,0,.022);"></div>
<div class="t" style="top:1122.22px;font-size:21px;line-height:21px;color:#333;left:1911.50px;width:800px;text-align:center;">-266</div>
<div class="b" style="left:2425px;top:1094px;width:221px;height:78px;background:#f4c5bc;box-shadow:inset 0 0 0 1px rgba(0,0,0,.022);"></div>
<div class="t" style="top:1122.22px;font-size:21px;line-height:21px;color:#333;left:2135.50px;width:800px;text-align:center;">-478</div>
<div class="b" style="left:2648px;top:1093px;width:174px;height:79px;background:#fafafa;"></div>
<div class="t" style="top:1122.22px;font-size:21px;line-height:21px;color:#333;left:2335.00px;width:800px;text-align:center;">1474</div>
<div class="b" style="left:36px;top:1174px;width:367px;height:79px;background:#f8f8f8;"></div>
<div class="t" style="top:1203.22px;font-size:21px;line-height:21px;color:#333;left:-180.50px;width:800px;text-align:center;">13:15</div>
<div class="b" style="left:406px;top:1175px;width:221px;height:78px;background:#f4c5bc;box-shadow:inset 0 0 0 1px rgba(0,0,0,.022);"></div>
<div class="t" style="top:1203.22px;font-size:21px;line-height:21px;color:#333;left:116.50px;width:800px;text-align:center;">-383</div>
<div class="b" style="left:630px;top:1175px;width:222px;height:78px;background:#eea5a0;box-shadow:inset 0 0 0 1px rgba(0,0,0,.022);"></div>
<div class="t" style="top:1203.22px;font-size:21px;line-height:21px;color:#333;left:341.00px;width:800px;text-align:center;">-765</div>
<div class="b" style="left:855px;top:1175px;width:221px;height:78px;background:#eb9492;box-shadow:inset 0 0 0 1px rgba(0,0,0,.022);"></div>
<div class="t" style="top:1203.22px;font-size:21px;line-height:21px;color:#333;left:565.50px;width:800px;text-align:center;">-1147</div>
<div class="b" style="left:1079px;top:1175px;width:221px;height:78px;background:#cbe1c2;box-shadow:inset 0 0 0 1px rgba(0,0,0,.022);"></div>
<div class="t" style="top:1203.22px;font-size:21px;line-height:21px;color:#333;left:789.50px;width:800px;text-align:center;">566</div>
<div class="b" style="left:1303px;top:1175px;width:222px;height:78px;background:#dbe7cd;box-shadow:inset 0 0 0 1px rgba(0,0,0,.022);"></div>
<div class="t" style="top:1203.22px;font-size:21px;line-height:21px;color:#333;left:1014.00px;width:800px;text-align:center;">333</div>
<div class="b" style="left:1528px;top:1175px;width:221px;height:78px;background:#ebedd4;box-shadow:inset 0 0 0 1px rgba(0,0,0,.022);"></div>
<div class="t" style="top:1203.22px;font-size:21px;line-height:21px;color:#333;left:1238.50px;width:800px;text-align:center;">101</div>
<div class="b" style="left:1752px;top:1175px;width:221px;height:78px;background:#fbe2d1;box-shadow:inset 0 0 0 1px rgba(0,0,0,.022);"></div>
<div class="t" style="top:1203.22px;font-size:21px;line-height:21px;color:#333;left:1462.50px;width:800px;text-align:center;">-131</div>
<div class="b" style="left:1976px;top:1175px;width:222px;height:78px;background:#f4c5bc;box-shadow:inset 0 0 0 1px rgba(0,0,0,.022);"></div>
<div class="t" style="top:1203.22px;font-size:21px;line-height:21px;color:#333;left:1687.00px;width:800px;text-align:center;">-364</div>
<div class="b" style="left:2201px;top:1175px;width:221px;height:78px;background:#f2b3ab;box-shadow:inset 0 0 0 1px rgba(0,0,0,.022);"></div>
<div class="t" style="top:1203.22px;font-size:21px;line-height:21px;color:#333;left:1911.50px;width:800px;text-align:center;">-597</div>
<div class="b" style="left:2425px;top:1175px;width:221px;height:78px;background:#eea5a0;box-shadow:inset 0 0 0 1px rgba(0,0,0,.022);"></div>
<div class="t" style="top:1203.22px;font-size:21px;line-height:21px;color:#333;left:2135.50px;width:800px;text-align:center;">-829</div>
<div class="b" style="left:2648px;top:1174px;width:174px;height:79px;background:#fafafa;"></div>
<div class="t" style="top:1203.22px;font-size:21px;line-height:21px;color:#333;left:2335.00px;width:800px;text-align:center;">-3216</div>
<div class="b" style="left:36px;top:1255px;width:367px;height:79px;background:#f8f8f8;"></div>
<div class="t" style="top:1284.22px;font-size:21px;line-height:21px;color:#333;left:-180.50px;width:800px;text-align:center;">13:45</div>
<div class="b" style="left:406px;top:1256px;width:221px;height:78px;background:#f5d5c7;box-shadow:inset 0 0 0 1px rgba(0,0,0,.022);"></div>
<div class="t" style="top:1284.22px;font-size:21px;line-height:21px;color:#333;left:116.50px;width:800px;text-align:center;">-300</div>
<div class="b" style="left:630px;top:1256px;width:222px;height:78px;background:#f2b3ab;box-shadow:inset 0 0 0 1px rgba(0,0,0,.022);"></div>
<div class="t" style="top:1284.22px;font-size:21px;line-height:21px;color:#333;left:341.00px;width:800px;text-align:center;">-599</div>
<div class="b" style="left:855px;top:1256px;width:221px;height:78px;background:#cbe1c2;box-shadow:inset 0 0 0 1px rgba(0,0,0,.022);"></div>
<div class="t" style="top:1284.22px;font-size:21px;line-height:21px;color:#333;left:565.50px;width:800px;text-align:center;">784</div>
<div class="b" style="left:1079px;top:1256px;width:221px;height:78px;background:#cbe1c2;box-shadow:inset 0 0 0 1px rgba(0,0,0,.022);"></div>
<div class="t" style="top:1284.22px;font-size:21px;line-height:21px;color:#333;left:789.50px;width:800px;text-align:center;">654</div>
<div class="b" style="left:1303px;top:1256px;width:222px;height:78px;background:#dbe7cd;box-shadow:inset 0 0 0 1px rgba(0,0,0,.022);"></div>
<div class="t" style="top:1284.22px;font-size:21px;line-height:21px;color:#333;left:1014.00px;width:800px;text-align:center;">524</div>
<div class="b" style="left:1528px;top:1256px;width:221px;height:78px;background:#dbe7cd;box-shadow:inset 0 0 0 1px rgba(0,0,0,.022);"></div>
<div class="t" style="top:1284.22px;font-size:21px;line-height:21px;color:#333;left:1238.50px;width:800px;text-align:center;">370</div>
<div class="b" style="left:1752px;top:1256px;width:221px;height:78px;background:#ebedd4;box-shadow:inset 0 0 0 1px rgba(0,0,0,.022);"></div>
<div class="t" style="top:1284.22px;font-size:21px;line-height:21px;color:#333;left:1462.50px;width:800px;text-align:center;">264</div>
<div class="b" style="left:1976px;top:1256px;width:222px;height:78px;background:#ebedd4;box-shadow:inset 0 0 0 1px rgba(0,0,0,.022);"></div>
<div class="t" style="top:1284.22px;font-size:21px;line-height:21px;color:#333;left:1687.00px;width:800px;text-align:center;">134</div>
<div class="b" style="left:2201px;top:1256px;width:221px;height:78px;background:#ebedd4;box-shadow:inset 0 0 0 1px rgba(0,0,0,.022);"></div>
<div class="t" style="top:1284.22px;font-size:21px;line-height:21px;color:#333;left:1911.50px;width:800px;text-align:center;">4</div>
<div class="b" style="left:2425px;top:1256px;width:221px;height:78px;background:#fbe2d1;box-shadow:inset 0 0 0 1px rgba(0,0,0,.022);"></div>
<div class="t" style="top:1284.22px;font-size:21px;line-height:21px;color:#333;left:2135.50px;width:800px;text-align:center;">-126</div>
<div class="b" style="left:2648px;top:1255px;width:174px;height:79px;background:#fafafa;"></div>
<div class="t" style="top:1284.22px;font-size:21px;line-height:21px;color:#333;left:2335.00px;width:800px;text-align:center;">1709</div>
<div class="b" style="left:36px;top:1336px;width:367px;height:79px;background:#f8f8f8;"></div>
<div class="t" style="top:1365.22px;font-size:21px;line-height:21px;color:#333;left:-180.50px;width:800px;text-align:center;">14:15</div>
<div class="b" style="left:406px;top:1337px;width:221px;height:78px;background:#f5d5c7;box-shadow:inset 0 0 0 1px rgba(0,0,0,.022);"></div>
<div class="t" style="top:1365.22px;font-size:21px;line-height:21px;color:#333;left:116.50px;width:800px;text-align:center;">-255</div>
<div class="b" style="left:630px;top:1337px;width:222px;height:78px;background:#bbdab7;box-shadow:inset 0 0 0 1px rgba(0,0,0,.022);"></div>
<div class="t" style="top:1365.22px;font-size:21px;line-height:21px;color:#333;left:341.00px;width:800px;text-align:center;">993</div>
<div class="b" style="left:855px;top:1337px;width:221px;height:78px;background:#cbe1c2;box-shadow:inset 0 0 0 1px rgba(0,0,0,.022);"></div>
<div class="t" style="top:1365.22px;font-size:21px;line-height:21px;color:#333;left:565.50px;width:800px;text-align:center;">863</div>
<div class="b" style="left:1079px;top:1337px;width:221px;height:78px;background:#cbe1c2;box-shadow:inset 0 0 0 1px rgba(0,0,0,.022);"></div>
<div class="t" style="top:1365.22px;font-size:21px;line-height:21px;color:#333;left:789.50px;width:800px;text-align:center;">734</div>
<div class="b" style="left:1303px;top:1337px;width:222px;height:78px;background:#cbe1c2;box-shadow:inset 0 0 0 1px rgba(0,0,0,.022);"></div>
<div class="t" style="top:1365.22px;font-size:21px;line-height:21px;color:#333;left:1014.00px;width:800px;text-align:center;">605</div>
<div class="b" style="left:1528px;top:1337px;width:221px;height:78px;background:#dbe7cd;box-shadow:inset 0 0 0 1px rgba(0,0,0,.022);"></div>
<div class="t" style="top:1365.22px;font-size:21px;line-height:21px;color:#333;left:1238.50px;width:800px;text-align:center;">476</div>
<div class="b" style="left:1752px;top:1337px;width:221px;height:78px;background:#dbe7cd;box-shadow:inset 0 0 0 1px rgba(0,0,0,.022);"></div>
<div class="t" style="top:1365.22px;font-size:21px;line-height:21px;color:#333;left:1462.50px;width:800px;text-align:center;">347</div>
<div class="b" style="left:1976px;top:1337px;width:222px;height:78px;background:#ebedd4;box-shadow:inset 0 0 0 1px rgba(0,0,0,.022);"></div>
<div class="t" style="top:1365.22px;font-size:21px;line-height:21px;color:#333;left:1687.00px;width:800px;text-align:center;">217</div>
<div class="b" style="left:2201px;top:1337px;width:221px;height:78px;background:#ebedd4;box-shadow:inset 0 0 0 1px rgba(0,0,0,.022);"></div>
<div class="t" style="top:1365.22px;font-size:21px;line-height:21px;color:#333;left:1911.50px;width:800px;text-align:center;">88</div>
<div class="b" style="left:2425px;top:1337px;width:221px;height:78px;background:#fbe2d1;box-shadow:inset 0 0 0 1px rgba(0,0,0,.022);"></div>
<div class="t" style="top:1365.22px;font-size:21px;line-height:21px;color:#333;left:2135.50px;width:800px;text-align:center;">-41</div>
<div class="b" style="left:2648px;top:1336px;width:174px;height:79px;background:#fafafa;"></div>
<div class="t" style="top:1365.22px;font-size:21px;line-height:21px;color:#333;left:2335.00px;width:800px;text-align:center;">4027</div>
<div class="b" style="left:36px;top:1417px;width:367px;height:79px;background:#f8f8f8;"></div>
<div class="t" style="top:1446.22px;font-size:21px;line-height:21px;color:#333;left:-180.50px;width:800px;text-align:center;">14:45</div>
<div class="b" style="left:406px;top:1418px;width:221px;height:78px;background:#f5d5c7;box-shadow:inset 0 0 0 1px rgba(0,0,0,.022);"></div>
<div class="t" style="top:1446.22px;font-size:21px;line-height:21px;color:#333;left:116.50px;width:800px;text-align:center;">-175</div>
<div class="b" style="left:630px;top:1418px;width:222px;height:78px;background:#f4c5bc;box-shadow:inset 0 0 0 1px rgba(0,0,0,.022);"></div>
<div class="t" style="top:1446.22px;font-size:21px;line-height:21px;color:#333;left:341.00px;width:800px;text-align:center;">-351</div>
<div class="b" style="left:855px;top:1418px;width:221px;height:78px;background:#cbe1c2;box-shadow:inset 0 0 0 1px rgba(0,0,0,.022);"></div>
<div class="t" style="top:1446.22px;font-size:21px;line-height:21px;color:#333;left:565.50px;width:800px;text-align:center;">614</div>
<div class="b" style="left:1079px;top:1418px;width:221px;height:78px;background:#dbe7cd;box-shadow:inset 0 0 0 1px rgba(0,0,0,.022);"></div>
<div class="t" style="top:1446.22px;font-size:21px;line-height:21px;color:#333;left:789.50px;width:800px;text-align:center;">531</div>
<div class="b" style="left:1303px;top:1418px;width:222px;height:78px;background:#dbe7cd;box-shadow:inset 0 0 0 1px rgba(0,0,0,.022);"></div>
<div class="t" style="top:1446.22px;font-size:21px;line-height:21px;color:#333;left:1014.00px;width:800px;text-align:center;">447</div>
<div class="b" style="left:1528px;top:1418px;width:221px;height:78px;background:#dbe7cd;box-shadow:inset 0 0 0 1px rgba(0,0,0,.022);"></div>
<div class="t" style="top:1446.22px;font-size:21px;line-height:21px;color:#333;left:1238.50px;width:800px;text-align:center;">364</div>
<div class="b" style="left:1752px;top:1418px;width:221px;height:78px;background:#dbe7cd;box-shadow:inset 0 0 0 1px rgba(0,0,0,.022);"></div>
<div class="t" style="top:1446.22px;font-size:21px;line-height:21px;color:#333;left:1462.50px;width:800px;text-align:center;">281</div>
<div class="b" style="left:1976px;top:1418px;width:222px;height:78px;background:#ebedd4;box-shadow:inset 0 0 0 1px rgba(0,0,0,.022);"></div>
<div class="t" style="top:1446.22px;font-size:21px;line-height:21px;color:#333;left:1687.00px;width:800px;text-align:center;">198</div>
<div class="b" style="left:2201px;top:1418px;width:221px;height:78px;background:#bbdab7;box-shadow:inset 0 0 0 1px rgba(0,0,0,.022);"></div>
<div class="t" style="top:1446.22px;font-size:21px;line-height:21px;color:#333;left:1911.50px;width:800px;text-align:center;">1175</div>
<div class="b" style="left:2425px;top:1418px;width:221px;height:78px;background:#bbdab7;box-shadow:inset 0 0 0 1px rgba(0,0,0,.022);"></div>
<div class="t" style="top:1446.22px;font-size:21px;line-height:21px;color:#333;left:2135.50px;width:800px;text-align:center;">1175</div>
<div class="b" style="left:2648px;top:1417px;width:174px;height:79px;background:#fafafa;"></div>
<div class="t" style="top:1446.22px;font-size:21px;line-height:21px;color:#333;left:2335.00px;width:800px;text-align:center;">4259</div>
<div class="b" style="left:36px;top:1498px;width:367px;height:79px;background:#f4f4f4;"></div>
<div class="t" style="top:1527.22px;font-size:21px;line-height:21px;color:#333;font-weight:700;left:-180.50px;width:800px;text-align:center;transform:scaleY(1.08);transform-origin:0 84.65%;">TOTAL</div>
<div class="b" style="left:405px;top:1499px;width:222px;height:78px;background:#fafafa;"></div>
<div class="t" style="top:1527.22px;font-size:21px;line-height:21px;color:#333;left:116.50px;width:800px;text-align:center;">7600</div>
<div class="b" style="left:629px;top:1499px;width:223px;height:78px;background:#fafafa;"></div>
<div class="t" style="top:1527.22px;font-size:21px;line-height:21px;color:#333;left:341.00px;width:800px;text-align:center;">7528</div>
<div class="b" style="left:854px;top:1499px;width:222px;height:78px;background:#fafafa;"></div>
<div class="t" style="top:1527.22px;font-size:21px;line-height:21px;color:#333;left:565.50px;width:800px;text-align:center;">11102</div>
<div class="b" style="left:1078px;top:1499px;width:222px;height:78px;background:#fafafa;"></div>
<div class="t" style="top:1527.22px;font-size:21px;line-height:21px;color:#333;left:789.50px;width:800px;text-align:center;">10333</div>
<div class="b" style="left:1302px;top:1499px;width:223px;height:78px;background:#fafafa;"></div>
<div class="t" style="top:1527.22px;font-size:21px;line-height:21px;color:#333;left:1014.00px;width:800px;text-align:center;">7615</div>
<div class="b" style="left:1527px;top:1499px;width:222px;height:78px;background:#fafafa;"></div>
<div class="t" style="top:1527.22px;font-size:21px;line-height:21px;color:#333;left:1238.50px;width:800px;text-align:center;">4876</div>
<div class="b" style="left:1751px;top:1499px;width:222px;height:78px;background:#fafafa;"></div>
<div class="t" style="top:1527.22px;font-size:21px;line-height:21px;color:#333;left:1462.50px;width:800px;text-align:center;">2186</div>
<div class="b" style="left:1975px;top:1499px;width:223px;height:78px;background:#fafafa;"></div>
<div class="t" style="top:1527.22px;font-size:21px;line-height:21px;color:#333;left:1687.00px;width:800px;text-align:center;">3366</div>
<div class="b" style="left:2200px;top:1499px;width:222px;height:78px;background:#fafafa;"></div>
<div class="t" style="top:1527.22px;font-size:21px;line-height:21px;color:#333;left:1911.50px;width:800px;text-align:center;">4993</div>
<div class="b" style="left:2424px;top:1499px;width:222px;height:78px;background:#fafafa;"></div>
<div class="t" style="top:1527.22px;font-size:21px;line-height:21px;color:#333;left:2135.50px;width:800px;text-align:center;">2794</div>
<div class="b" style="left:2648px;top:1499px;width:174px;height:78px;background:#fafafa;"></div>
<div class="t" style="top:1527.22px;font-size:21px;line-height:21px;color:#333;left:2335.00px;width:800px;text-align:center;">62393</div>
<div class="b" style="left:706px;top:642px;width:82px;height:38px;background:#dee3dd;box-shadow:0 5px 11px rgba(40,70,40,.26),0 0 2px rgba(40,70,40,.2);"></div>
<div class="t" style="top:649.38px;font-size:22px;line-height:22px;color:#3a3a3a;letter-spacing:1.75px;left:718.60px;">3802</div>
</div></body></html>
